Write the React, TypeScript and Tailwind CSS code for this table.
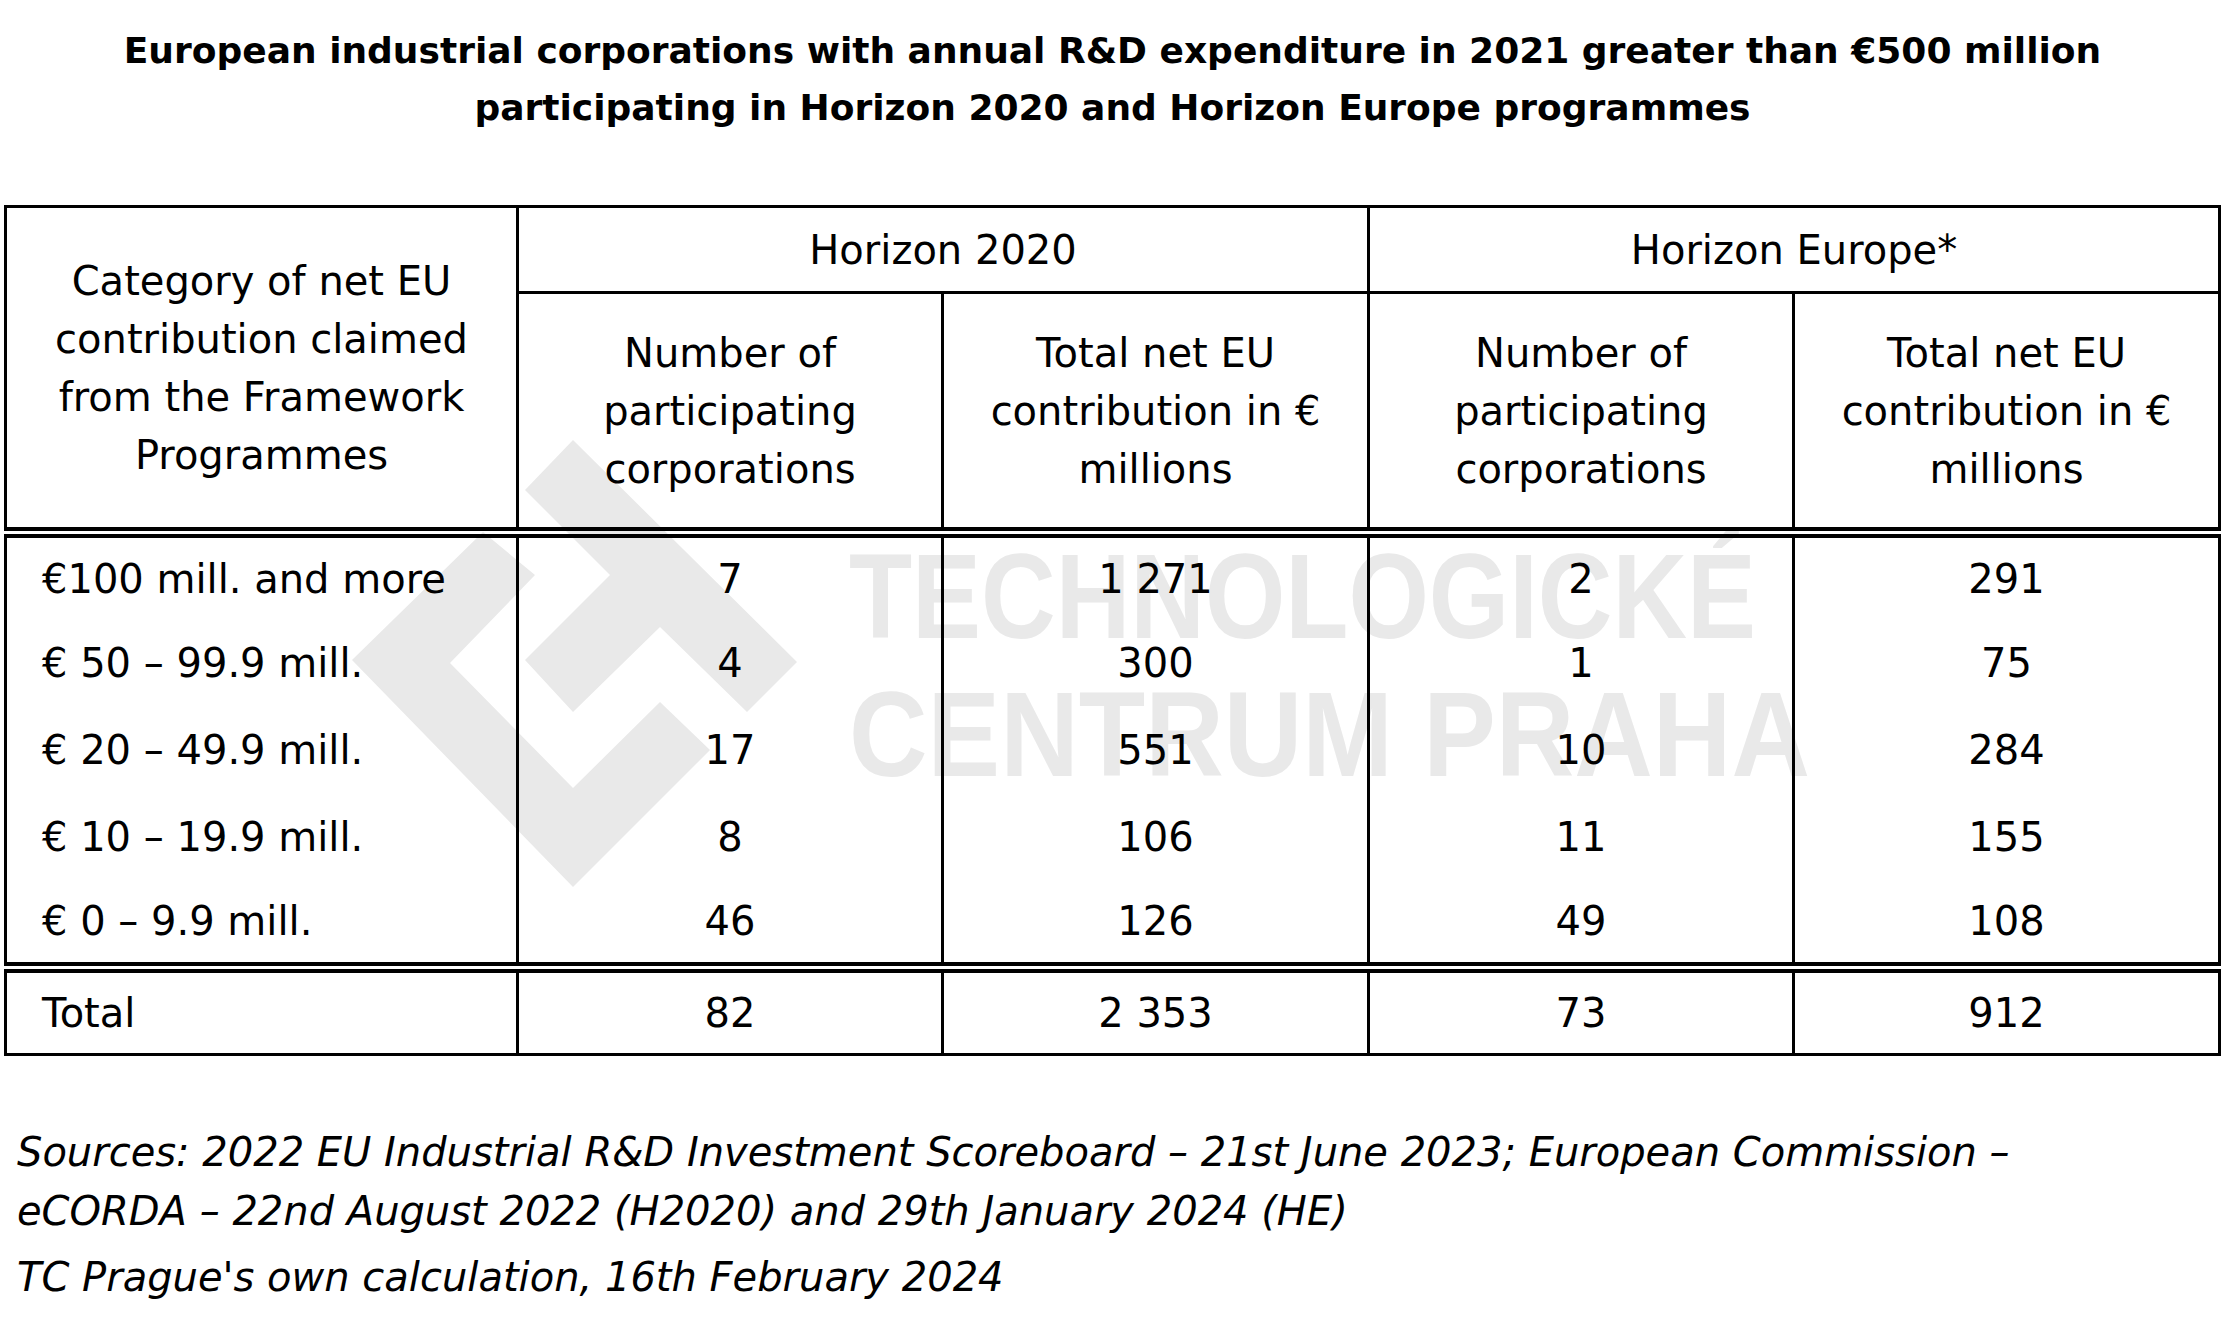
const rows = [
  { label: "€100 mill. and more", a: "7", b: "1 271", c: "2", d: "291" },
  { label: "€ 50 – 99.9 mill.", a: "4", b: "300", c: "1", d: "75" },
  { label: "€ 20 – 49.9 mill.", a: "17", b: "551", c: "10", d: "284" },
  { label: "€ 10 – 19.9 mill.", a: "8", b: "106", c: "11", d: "155" },
  { label: "€ 0 – 9.9 mill.", a: "46", b: "126", c: "49", d: "108" },
];

const Watermark = () => (
  <svg
    className="pointer-events-none absolute left-0 top-0 h-[1326px] w-[2225px]"
    viewBox="0 0 2225 1326"
  >
    <g fill="#e9e9e9">
      <polygon points="573,440 797,662 747,712 660,627 573,712 525,660 610,575 525,490" />
      <polygon points="483,532 535,575 450,663 573,788 660,702 710,750 573,887 352,660" />
      <text
        x="849"
        y="638"
        fontFamily="'Liberation Sans', sans-serif"
        fontWeight="700"
        fontSize="120"
        textLength="907"
        lengthAdjust="spacingAndGlyphs"
      >
        TECHNOLOGICKÉ
      </text>
      <text
        x="849"
        y="776"
        fontFamily="'Liberation Sans', sans-serif"
        fontWeight="700"
        fontSize="120"
        textLength="961"
        lengthAdjust="spacingAndGlyphs"
      >
        CENTRUM PRAHA
      </text>
    </g>
  </svg>
);

export default function App() {
  const head = "border-[3px] border-black text-center align-middle font-normal";
  const headLast = `${head} border-b-[11px] [border-bottom-style:double]`;
  const body = "border-x-[3px] border-black align-middle";
  const total =
    "border-[3px] border-t-[11px] border-black align-middle [border-top-style:double]";
  return (
    <div className="relative min-h-screen w-[2225px] bg-white font-['DejaVu_Sans',sans-serif] text-black">
      <Watermark />
      <div className="relative">
        <h1 className="pt-[22px] text-center text-[36px] font-bold leading-[57px]">
          European industrial corporations with annual R&amp;D expenditure in 2021 greater than €500 million
          <br />
          participating in Horizon 2020 and Horizon Europe programmes
        </h1>

        <div className="mt-[69px] pl-[4px]">
          <table className="w-[2214px] table-fixed border-collapse text-[40px] leading-[58px]">
            <colgroup>
              <col className="w-[512px]" />
              <col className="w-[425px]" />
              <col className="w-[426px]" />
              <col className="w-[425px]" />
              <col className="w-[426px]" />
            </colgroup>
            <thead>
              <tr className="h-[86px]">
                <th rowSpan={2} className={headLast}>
                  Category of net EU
                  <br />
                  contribution claimed
                  <br />
                  from the Framework
                  <br />
                  Programmes
                </th>
                <th colSpan={2} className={head}>
                  Horizon 2020
                </th>
                <th colSpan={2} className={head}>
                  Horizon Europe*
                </th>
              </tr>
              <tr className="h-[240px]">
                <th className={headLast}>
                  Number of
                  <br />
                  participating
                  <br />
                  corporations
                </th>
                <th className={headLast}>
                  Total net EU
                  <br />
                  contribution in €
                  <br />
                  millions
                </th>
                <th className={headLast}>
                  Number of
                  <br />
                  participating
                  <br />
                  corporations
                </th>
                <th className={headLast}>
                  Total net EU
                  <br />
                  contribution in €
                  <br />
                  millions
                </th>
              </tr>
            </thead>
            <tbody>
              {rows.map((r) => (
                <tr key={r.label} className="h-[87px]">
                  <td className={`${body} pl-[35px] text-left`}>{r.label}</td>
                  <td className={`${body} text-center`}>{r.a}</td>
                  <td className={`${body} text-center`}>{r.b}</td>
                  <td className={`${body} text-center`}>{r.c}</td>
                  <td className={`${body} text-center`}>{r.d}</td>
                </tr>
              ))}
              <tr className="h-[87px]">
                <td className={`${total} pl-[35px] text-left`}>Total</td>
                <td className={`${total} text-center`}>82</td>
                <td className={`${total} text-center`}>2 353</td>
                <td className={`${total} text-center`}>73</td>
                <td className={`${total} text-center`}>912</td>
              </tr>
            </tbody>
          </table>
        </div>

        <div className="mt-[67px] pl-[17px] text-[40px] italic leading-[59px]">
          <p>
            Sources: 2022 EU Industrial R&amp;D Investment Scoreboard – 21st June 2023; European Commission –
            <br />
            eCORDA – 22nd August 2022 (H2020) and 29th January 2024 (HE)
          </p>
          <p className="mt-[7px]">TC Prague's own calculation, 16th February 2024</p>
        </div>
      </div>
    </div>
  );
}
